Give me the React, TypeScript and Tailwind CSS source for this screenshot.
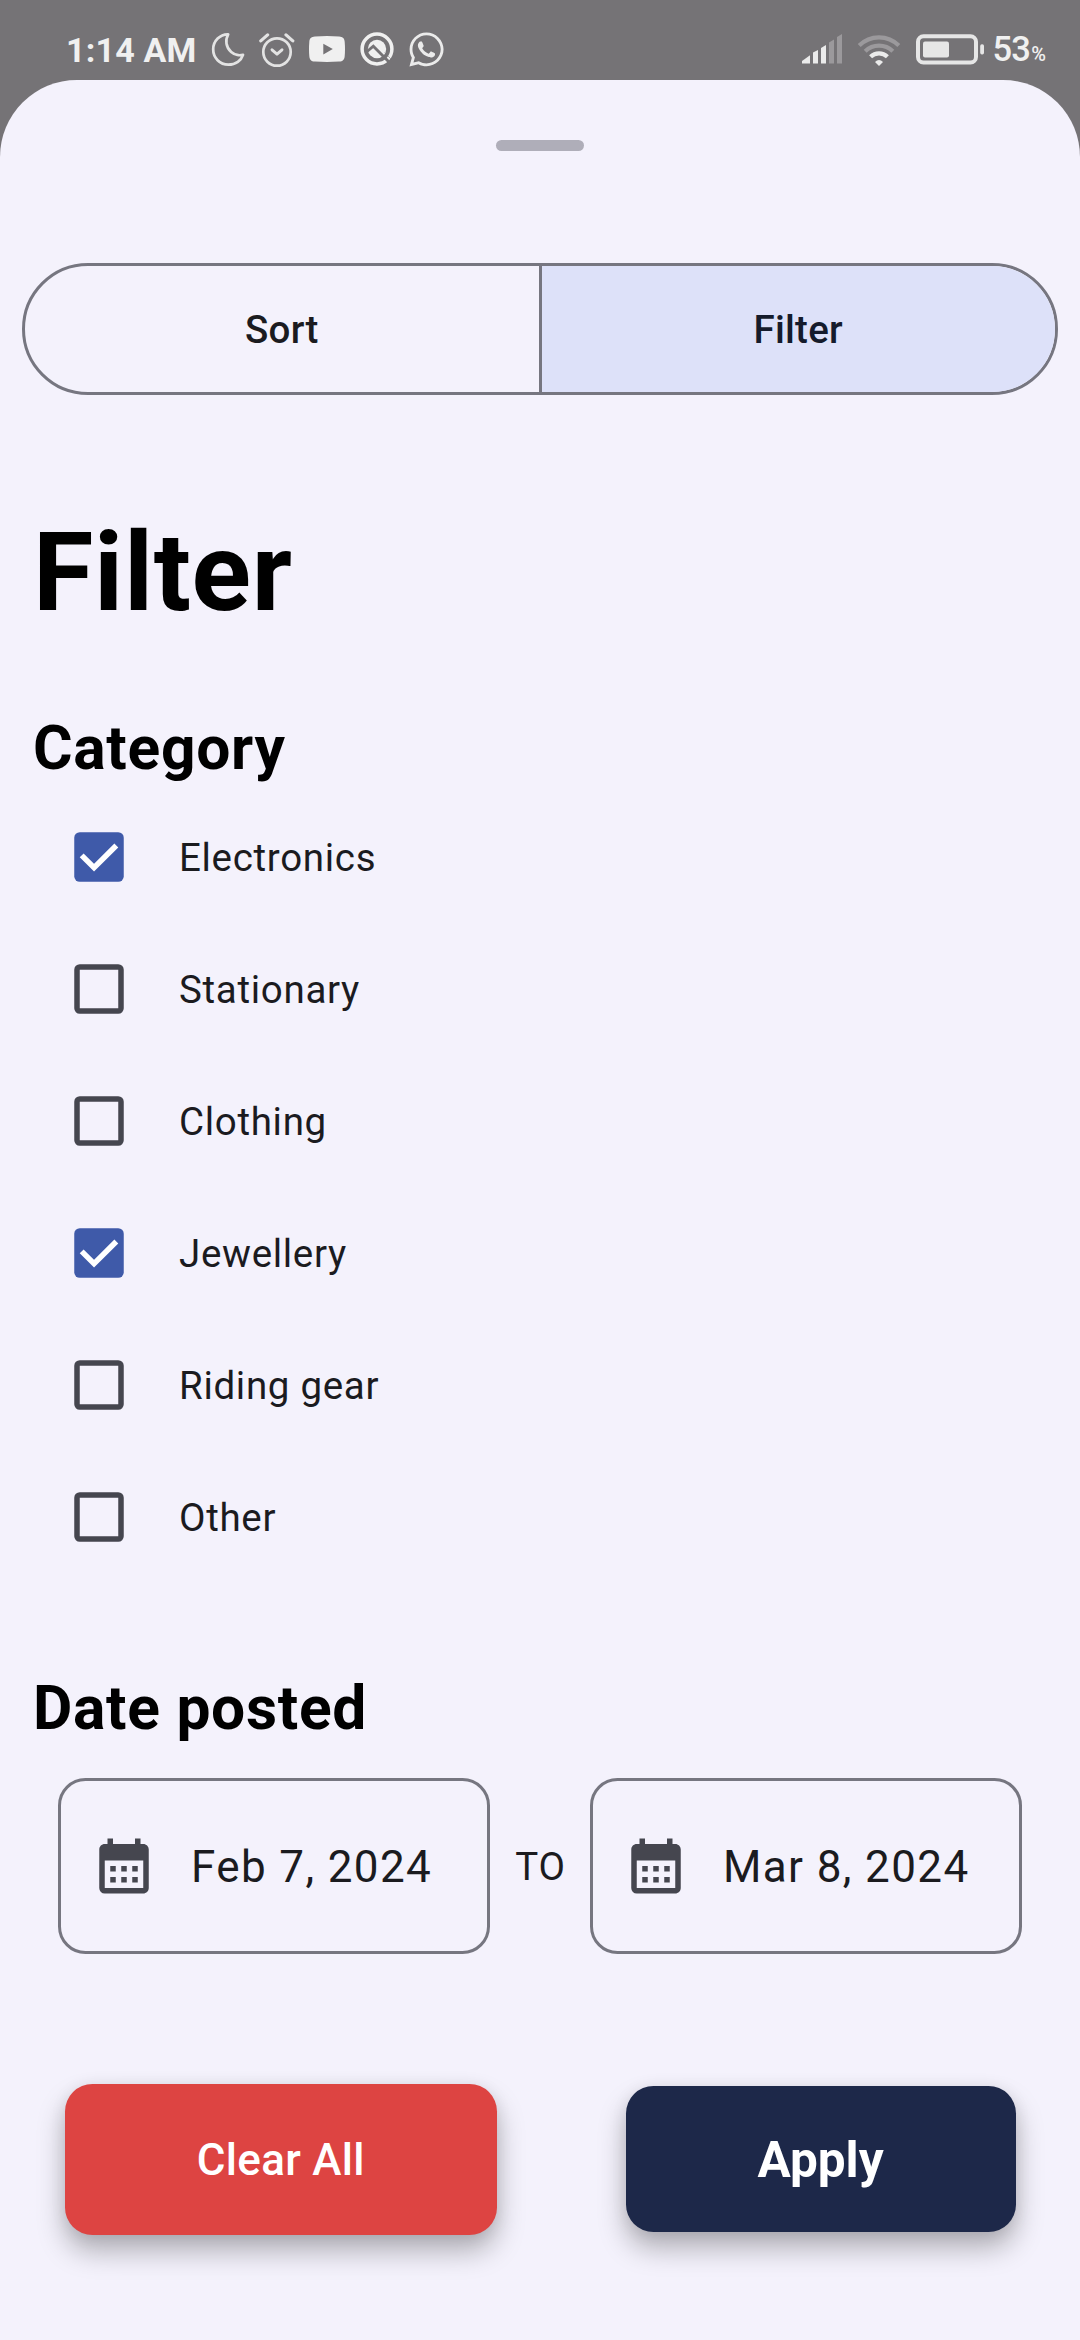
import React, { useState } from "react";
import { FaWhatsapp } from "react-icons/fa";
import { MdCalendarMonth } from "react-icons/md";

function MoonIcon() {
  return (
    <svg className="h-[36px] w-[36px]" viewBox="210 31 36 36" fill="none" stroke="#e3e3e3" strokeWidth="2.7" strokeLinejoin="round">
      <path d="M228.2 34.3C220 34 213.2 41 213.2 49.3a15.2 15.2 0 0 0 15.2 15.4c7.400 0 12.900-4.400 14.600-9.900-3 .8-8.200.3-11.800-2.900-5.400-4.600-6.200-12-3-17.600z" />
    </svg>
  );
}

function AlarmIcon() {
  return (
    <svg className="h-[36px] w-[36px]" viewBox="259 32 36 36" fill="none" stroke="#e3e3e3" strokeLinecap="round" strokeLinejoin="round">
      <circle cx="277" cy="52" r="13.700" strokeWidth="2.700" />
      <path d="M272 49.800l5 4.400 5-4.400" strokeWidth="2.900" />
      <path d="M260.800 40.900l6.800-6M292.800 40.900l-6.800-6" strokeWidth="3.200" />
    </svg>
  );
}

function VideoIcon() {
  return (
    <svg className="h-[26px] w-[36px]" viewBox="0 0 36 26">
      <path
        fill="#f0f0f0"
        fillRule="evenodd"
        d="M6 .4Q18-.4 30 .4c4 .2 5.500 2 5.700 5.600q.6 7 0 14c-.2 3.600-1.700 5.400-5.700 5.600q-12 .8-24 0C2 25.400.5 23.600.3 20q-.6-7 0-14C.5 2.400 2 .6 6 .4zM14.300 7.700v10.800l9.500-5.400z"
      />
    </svg>
  );
}

function CompassIcon() {
  return (
    <svg className="h-[34px] w-[34px]" viewBox="360 32 34 34" fill="none">
      <circle cx="377" cy="49" r="14.900" stroke="#f0f0f0" strokeWidth="3.500" />
      <circle cx="377" cy="49" r="9.200" fill="#f0f0f0" />
      <path d="M366.500 52L373.300 46.200L389 62" stroke="#757376" strokeWidth="2.800" />
      <path d="M384.500 52.500L392 60" stroke="#757376" strokeWidth="0.500" />
    </svg>
  );
}

function SignalIcon() {
  return (
    <svg className="h-[30px] w-[41px]" viewBox="802 33.500 41 30">
      <g fill="#ebebeb">
        <path d="M802 63v-2.500l8-5.700V63z" />
        <path d="M813 63V52l5-2.600V63z" />
        <path d="M821 63V47.500l5-3V63z" />
      </g>
      <g fill="#9b999c">
        <path d="M829 63V42l5-3V63z" />
        <path d="M837 63V36.500l5-3V63z" />
      </g>
    </svg>
  );
}

function WifiIcon() {
  return (
    <svg className="h-[32px] w-[44px]" viewBox="857 33.500 44 32" fill="none" strokeWidth="4.200">
      <path d="M859.200 45a28 28 0 0 1 39.600 0M865.200 50.800a19.600 19.600 0 0 1 27.600 0" stroke="#9b999c" />
      <path d="M870.600 56.300a12 12 0 0 1 16.800 0" stroke="#ebebeb" />
      <path d="M875 61.400q4-4 8 0L879 65.400z" fill="#ebebeb" />
    </svg>
  );
}

function BatteryIcon() {
  return (
    <svg className="h-[31px] w-[69px]" viewBox="916 33.500 69 31">
      <rect x="918" y="35.700" width="58" height="26.300" rx="5.500" fill="none" stroke="#e6e6e6" strokeWidth="4" />
      <rect x="923" y="41" width="26" height="16" rx="2" fill="#e6e6e6" />
      <rect x="980.200" y="43.700" width="3.800" height="10.300" rx="1.700" fill="#e6e6e6" />
    </svg>
  );
}

function StatusBar() {
  return (
    <header className="flex h-[80px] items-start text-[#f0f0f0]">
      <span className="ml-[66px] mt-[30px] w-[144px] whitespace-nowrap text-[34px] font-bold leading-[40px] tracking-[0.2px]">1:14 AM</span>
      <div className="mt-[31px]"><MoonIcon /></div>
      <div className="ml-[13px] mt-[32px]"><AlarmIcon /></div>
      <div className="ml-[14px] mt-[36px]"><VideoIcon /></div>
      <div className="ml-[15px] mt-[32px]"><CompassIcon /></div>
      <div className="ml-[13px] mt-[30px]"><FaWhatsapp size={39} color="#ebebeb" /></div>
      <div className="ml-auto mt-[33.5px]"><SignalIcon /></div>
      <div className="ml-[14px] mt-[33.5px]"><WifiIcon /></div>
      <div className="ml-[15px] mt-[33.5px]"><BatteryIcon /></div>
      <div className="ml-[7.5px] mt-[29px] flex w-[87.5px] items-baseline font-medium">
        <span className="text-[34.5px] leading-[40px] tracking-[-0.8px]">53</span>
        <span className="ml-px text-[20px] leading-[40px]">%</span>
      </div>
    </header>
  );
}

function SegmentedControl() {
  return (
    <div className="mx-[22px] mt-[112px] flex h-[132px] shrink-0 overflow-hidden rounded-full border-3 border-[#767680] text-[38.5px] font-medium tracking-[0.275px]">
      <button className="flex flex-1 items-center justify-center border-r-3 border-[#767680] pt-0.5 text-[#1b1b1f]">Sort</button>
      <button className="flex flex-1 items-center justify-center bg-[#dde1f9] pt-0.5 text-[#151b2c]">Filter</button>
    </div>
  );
}

interface CategoryRowProps {
  label: string;
  checked: boolean;
  onToggle: () => void;
}

function CategoryRow({ label, checked, onToggle }: CategoryRowProps) {
  return (
    <button
      role="checkbox"
      aria-checked={checked}
      onClick={onToggle}
      className="flex h-[132px] items-center pl-[66px] text-left"
    >
      <svg className="h-[66px] w-[66px]" viewBox="0 0 24 24">
        {checked ? (
          <>
            <rect x="3" y="3" width="18" height="18" rx="2" fill="#3f5aa9" />
            <path d="M5.700 11.400L10.200 15.900L18.300 7.800" fill="none" stroke="#fff" strokeWidth="2" />
          </>
        ) : (
          <rect x="4" y="4" width="16" height="16" rx="1" fill="none" stroke="#45464f" strokeWidth="2" />
        )}
      </svg>
      <span className="ml-[47px] pt-0.5 text-[38.5px] tracking-[0.6875px] text-[#1b1b1f]">{label}</span>
    </button>
  );
}

function DateField({ value }: { value: string }) {
  return (
    <div className="flex h-[176px] w-[432px] items-center rounded-[27.5px] border-3 border-[#767680]">
      <MdCalendarMonth className="ml-[30px]" size={66} color="#45464f" />
      <span className="ml-[34px] whitespace-nowrap pt-0.5 text-[44px] tracking-[1.375px] text-[#1b1b1f]">{value}</span>
    </div>
  );
}

const CATEGORIES = ["Electronics", "Stationary", "Clothing", "Jewellery", "Riding gear", "Other"];

export default function App() {
  const [selected, setSelected] = useState<string[]>(["Electronics", "Jewellery"]);
  const toggle = (name: string) =>
    setSelected((s) => (s.includes(name) ? s.filter((n) => n !== name) : [...s, name]));

  return (
    <div className="h-[2340px] w-[1080px] overflow-hidden bg-[#757376] font-['Roboto',sans-serif]">
      <StatusBar />
      <main className="flex h-[2260px] flex-col rounded-t-[77px] bg-[#f4f2fc]">
        <div className="mt-[60px] h-[11px] w-[88px] shrink-0 self-center rounded-full bg-[#afaeb9]" />
        <SegmentedControl />

        <h1 className="ml-[33px] mt-[114px] text-[110px] font-bold leading-[128px] tracking-[0.7px] text-black">Filter</h1>

        <h2 className="ml-[33px] mt-[76px] text-[60.5px] font-bold leading-[72px] tracking-[0.7px] text-black">Category</h2>
        <div className="mt-[6px] flex flex-col">
          {CATEGORIES.map((name) => (
            <CategoryRow key={name} label={name} checked={selected.includes(name)} onToggle={() => toggle(name)} />
          ))}
        </div>

        <h2 className="ml-[33px] mt-[90px] text-[60.5px] font-bold leading-[72px] tracking-[0.7px] text-black">Date posted</h2>
        <div className="mx-[58px] mt-[33px] flex items-center justify-between">
          <DateField value="Feb 7, 2024" />
          <span className="pl-px pt-0.5 text-[38.5px] tracking-[0.7px] text-[#1b1b1f]">TO</span>
          <DateField value="Mar 8, 2024" />
        </div>

        <div className="ml-[64.5px] mr-[64.5px] mt-[129.5px] flex items-center justify-between">
          <button className="h-[151.5px] w-[432.5px] rounded-[27.5px] bg-[#dd4442] pt-0.5 text-[44px] font-medium tracking-[0.275px] text-white shadow-[0_16px_28px_rgba(0,0,0,0.28),0_2px_16px_rgba(0,0,0,0.08)]">
            Clear All
          </button>
          <button className="h-[146px] w-[390px] rounded-[27.5px] bg-[#1d2849] pt-0.5 text-[49.5px] font-bold text-white shadow-[0_16px_28px_rgba(0,0,0,0.28),0_2px_16px_rgba(0,0,0,0.08)]">
            Apply
          </button>
        </div>
      </main>
    </div>
  );
}
